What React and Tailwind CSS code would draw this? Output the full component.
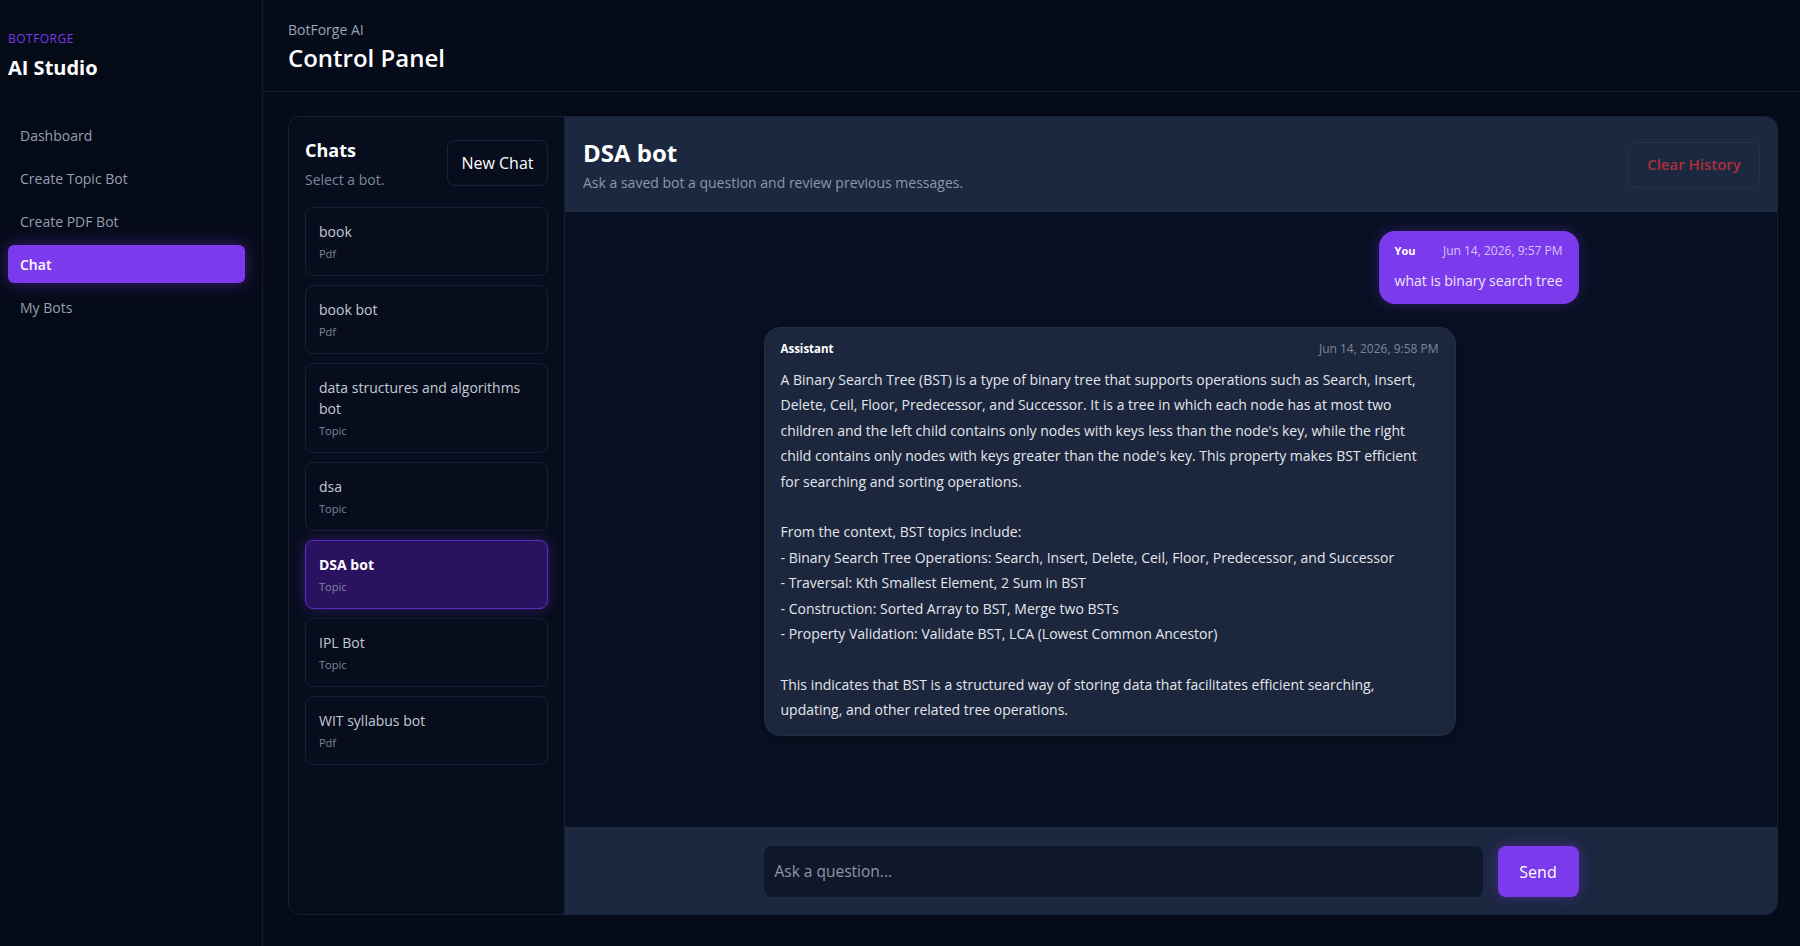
import React from "react";

const navItems = ["Dashboard", "Create Topic Bot", "Create PDF Bot", "Chat", "My Bots"];

const bots = [
  { name: "book", type: "Pdf" },
  { name: "book bot", type: "Pdf" },
  { name: "data structures and algorithms bot", type: "Topic" },
  { name: "dsa", type: "Topic" },
  { name: "DSA bot", type: "Topic", active: true },
  { name: "IPL Bot", type: "Topic" },
  { name: "WIT syllabus bot", type: "Pdf" },
];

export default function App() {
  return (
    <div className="flex h-[946px] w-full overflow-hidden bg-[#060b19] font-['Open_Sans','Liberation_Sans',sans-serif] text-white">
      {/* Sidebar */}
      <aside className="flex w-[263px] shrink-0 flex-col border-r border-[#141b2b] bg-[#050a17] pl-2 pr-[17px]">
        <div className="pt-[31px] text-[12px] font-medium uppercase leading-4 tracking-[0.04em] text-[#7c3aed]">Botforge</div>
        <div className="mt-[9px] text-[20px] font-bold leading-6 text-white">AI Studio</div>
        <nav className="mt-[36px] flex flex-col gap-[5px]">
          {navItems.map((item) =>
            item === "Chat" ? (
              <div
                key={item}
                className="flex h-[38px] items-center rounded-md bg-[#7c3aed] px-3 text-[14px] font-semibold text-white shadow-[0_0_18px_rgba(124,58,237,0.45)]"
              >
                {item}
              </div>
            ) : (
              <div key={item} className="flex h-[38px] items-center px-3 text-[14px] text-[#959fb1]">
                {item}
              </div>
            )
          )}
        </nav>
      </aside>

      {/* Main */}
      <main className="flex min-w-0 flex-1 flex-col">
        <header className="flex h-[92px] shrink-0 flex-col justify-center border-b border-[#111a2a] px-[25px] pt-[2px]">
          <div className="text-[14px] leading-5 text-[#9aa4b5]">BotForge AI</div>
          <div className="mt-[2px] text-[24px] font-semibold leading-8 text-white">Control Panel</div>
        </header>

        <div className="flex-1 pl-[25px] pr-[22px] pt-[24px]">
          <div className="flex h-[799px] overflow-hidden rounded-xl border border-[#182134]">
            {/* Chat list */}
            <section className="flex w-[276px] shrink-0 flex-col border-r border-[#182134] bg-[#070d1c] px-4 pt-[21px]">
              <div className="flex items-start justify-between">
                <div>
                  <div className="text-[18px] font-bold leading-6 text-white">Chats</div>
                  <div className="mt-[8px] text-[14px] leading-5 text-[#7d8799]">Select a bot.</div>
                </div>
                <button className="mt-[2px] h-[46px] w-[101px] rounded-lg border border-[#1a2336] text-[16px] text-white">
                  New Chat
                </button>
              </div>
              <div className="mt-[17px] flex flex-col gap-[9px]">
                {bots.map((b) => (
                  <div
                    key={b.name}
                    className={
                      b.active
                        ? "rounded-lg border border-[#5b2bc4] bg-[#2a1260] px-[13px] py-[13px] shadow-[0_0_14px_rgba(124,58,237,0.35)]"
                        : "rounded-lg border border-[#182134] bg-[#070d1c] px-[13px] py-[13px]"
                    }
                  >
                    <div
                      className={
                        b.active
                          ? "text-[14px] font-bold leading-[21px] text-white"
                          : "text-[14px] leading-[21px] text-[#c4cad4]"
                      }
                    >
                      {b.name}
                    </div>
                    <div className="mt-[4px] text-[11px] leading-4 text-[#7d8799]">{b.type}</div>
                  </div>
                ))}
              </div>
            </section>

            {/* Chat area */}
            <section className="flex min-w-0 flex-1 flex-col">
              <div className="flex h-[95px] shrink-0 items-center justify-between bg-[#1c2740] pl-[18px] pr-[17px]">
                <div>
                  <div className="text-[24px] font-bold leading-8 text-white">DSA bot</div>
                  <div className="mt-[4px] text-[14px] leading-5 text-[#8e98aa]">
                    Ask a saved bot a question and review previous messages.
                  </div>
                </div>
                <button className="h-[46px] w-[132px] rounded-lg border border-[#28324a] text-[15px] font-semibold text-[#ad2f3d]">
                  Clear History
                </button>
              </div>

              <div className="flex-1 bg-[#081023] pt-[19px]">
                <div className="mx-auto flex w-[815px] flex-col gap-[23px]">
                  <div className="flex justify-end">
                    <div className="rounded-2xl bg-[#7c3aed] px-4 pb-[13px] pt-[12px] shadow-[0_0_14px_rgba(124,58,237,0.3)]">
                      <div className="flex items-center justify-between gap-6 leading-4">
                        <span className="text-[11px] font-bold text-white">You</span>
                        <span className="text-[12px] text-[#d5c3fb]">Jun 14, 2026, 9:57 PM</span>
                      </div>
                      <div className="mt-[12px] text-[14px] leading-5 text-[#ede6fd]">what is binary search tree</div>
                    </div>
                  </div>

                  <div className="flex justify-start">
                    <div className="w-[692px] rounded-2xl border border-[#232e45] bg-[#1c263d] px-4 pb-[12px] pt-[13px] shadow-[0_4px_18px_rgba(0,0,0,0.35)]">
                      <div className="flex items-center justify-between leading-4">
                        <span className="text-[11.5px] font-bold text-white">Assistant</span>
                        <span className="text-[12px] text-[#7d8799]">Jun 14, 2026, 9:58 PM</span>
                      </div>
                      <div className="mt-[10px] whitespace-pre-line text-[14px] leading-[25.4px] text-[#e3e6ec]">
                        {`A Binary Search Tree (BST) is a type of binary tree that supports operations such as Search, Insert, Delete, Ceil, Floor, Predecessor, and Successor. It is a tree in which each node has at most two children and the left child contains only nodes with keys less than the node's key, while the right child contains only nodes with keys greater than the node's key. This property makes BST efficient for searching and sorting operations.

From the context, BST topics include:
- Binary Search Tree Operations: Search, Insert, Delete, Ceil, Floor, Predecessor, and Successor
- Traversal: Kth Smallest Element, 2 Sum in BST
- Construction: Sorted Array to BST, Merge two BSTs
- Property Validation: Validate BST, LCA (Lowest Common Ancestor)

This indicates that BST is a structured way of storing data that facilitates efficient searching, updating, and other related tree operations.`}
                      </div>
                    </div>
                  </div>
                </div>
              </div>

              <div className="flex h-[87px] shrink-0 items-center justify-center bg-[#1c2740]">
                <div className="flex w-[815px] items-center gap-[15px] pt-[2px]">
                  <div className="flex h-[51px] flex-1 items-center rounded-lg bg-[#0f172b] px-[11px] text-[15.5px] text-[#8e98aa]">
                    Ask a question...
                  </div>
                  <button className="h-[51px] w-[81px] rounded-lg bg-[#7c3aed] text-[16px] font-medium text-white shadow-[0_0_14px_rgba(124,58,237,0.4)]">
                    Send
                  </button>
                </div>
              </div>
            </section>
          </div>
        </div>
      </main>
    </div>
  );
}
